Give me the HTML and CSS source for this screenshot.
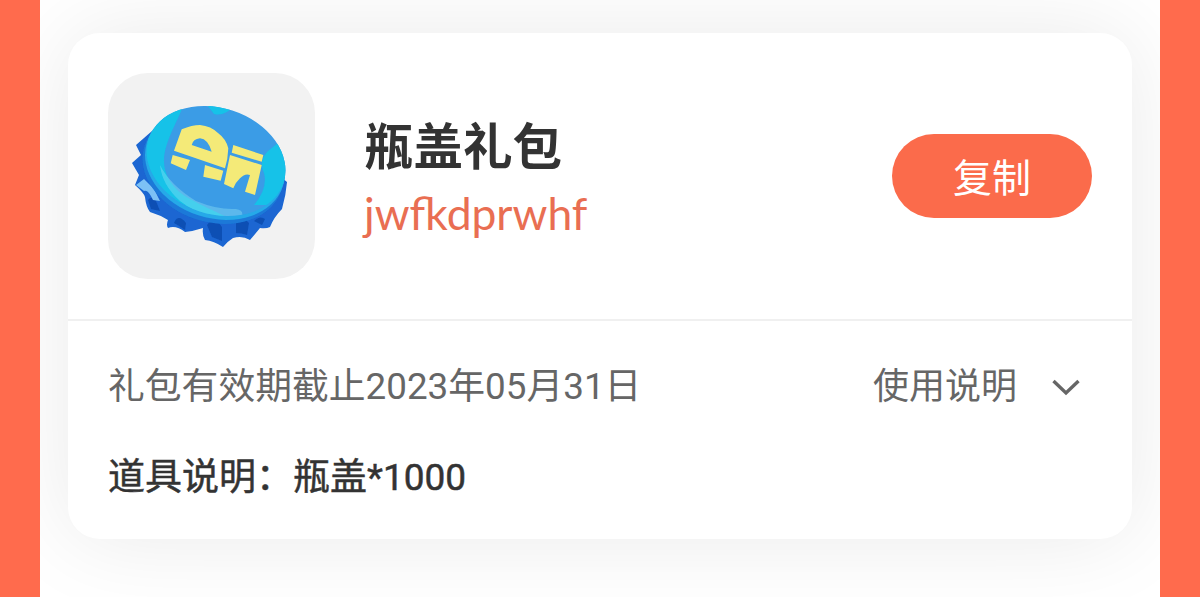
FILE: index.html
```html
<!DOCTYPE html>
<html lang="zh">
<head>
<meta charset="utf-8">
<title>瓶盖礼包</title>
<link rel="stylesheet" href="styles.css">
</head>
<body>
<main class="panel">
  <section class="card">
    <div class="head">
      <div class="tile">
        <svg class="cap" viewBox="0 0 207 207" width="207" height="207">
          <defs>
            <clipPath id="face"><ellipse cx="108" cy="88" rx="71" ry="53" transform="rotate(18 108 88)"/></clipPath>
            <filter id="soft" x="-5%" y="-5%" width="110%" height="110%"><feGaussianBlur stdDeviation=".7"/></filter>
          </defs>
          <g filter="url(#soft)">
            <path fill="#1a66d2" d="M44 58L28 72L33 82L24 90L31 102L27 112Q36 120 37 124Q38 134 42 139Q52 142 60 147Q58 152 60 155Q68 152 77 159Q86 158 95 155Q94 162 97 167Q106 168 115 174Q120 168 125 165Q134 162 142 167Q148 160 152 155Q158 156 162 154Q166 144 174 136Q178 122 179 109L120 60Z"/>
            <path fill="#0f4fb4" d="M66 150Q70 140 78 150L77 157Q70 152 66 150ZM99 152Q106 142 114 154L114 168L104 164ZM128 150Q134 142 141 150L139 162Q134 160 128 160ZM146 148Q152 142 157 146L154 152ZM40 127Q44 122 48 128L52 138L43 136Z"/>
            <path fill="#7cc1f5" d="M28 112L36 106L46 116L52 128L45 127Q40 116 36 118Q32 115 28 112Z"/>
            <ellipse cx="105" cy="95" rx="72" ry="54" transform="rotate(18 105 95)" fill="#1b79d8"/>
            <ellipse cx="107" cy="91" rx="71.5" ry="54" transform="rotate(18 107 91)" fill="#25a9e8"/>
            <ellipse cx="108" cy="88" rx="71" ry="53" transform="rotate(18 108 88)" fill="#3a9ce6"/>
            <g clip-path="url(#face)">
              <path fill="#14c2e8" d="M25 30L76 30C72 44 62 58 57 78C53 96 60 114 82 126C100 136 112 140 130 150L25 150Z"/>
              <path fill="#14c2e8" d="M96 28L106 41Q118 44 128 30ZM175 66L160 78Q150 88 156 100Q160 116 146 132L195 132Z"/>
              <path fill="#8fe3f5" opacity=".4" d="M52 92Q62 112 88 128Q110 137 128 136Q136 137 134 144Q100 150 72 128Q54 112 52 92Z"/>
            </g>
            <path fill="#f4ea78" fill-rule="evenodd" d="M73.7 56.3Q84 52 92 52Q103 53 110.3 60.3Q118 66 120.3 75.3Q120 86 117 95.3L66 77.7ZM83.7 72L103.7 78.7Q100 66 92 65.3Q85 66 83.7 72Z"/>
            <path fill="#f4ea78" d="M64.7 82L82 87L78 97L62.7 90.3ZM97 92L115.3 97.7L112.7 107.7L95.3 103.7Z"/>
            <path fill="#f4ea78" d="M125.3 72L155.3 82L153.7 88.7L123.7 79.7ZM122 82L153.7 92L147 122L137 118.7L142 102Q137 100 132 105.3Q127 110 125.3 115.3L116 111Z"/>
          </g>
        </svg>
      </div>
      <div class="info">
        <h1 class="name">瓶盖礼包</h1>
        <p class="code">jwfkdprwhf</p>
      </div>
      <button class="copy" type="button">复制</button>
    </div>
    <div class="foot">
      <div class="meta">
        <span class="expiry">礼包有效期截止2023年05月31日</span>
        <span class="usage">使用说明
          <svg class="chev" viewBox="0 0 30 18" width="30" height="18"><path d="M2.5 3L15 15L27.5 3" fill="none" stroke="#666" stroke-width="3.4"/></svg>
        </span>
      </div>
      <p class="desc">道具说明：瓶盖*1000</p>
    </div>
  </section>
</main>
</body>
</html>
```
FILE: styles.css
```css
* { box-sizing: border-box; }
html, body { margin: 0; height: 597px; overflow: hidden; }
body {
  background: #ff6b4d;
  padding: 0 40px;
  font-family: "Roboto", "Noto Sans CJK SC", sans-serif;
}
.panel {
  height: 597px;
  padding: 33px 28px 0;
  background: #fff;
  overflow: hidden;
}
.card {
  height: 506px;
  background: #fff;
  border-radius: 32px;
  box-shadow: 0 0 90px rgba(0, 0, 0, .085);
}
.head {
  height: 288px;
  padding: 40px 40px 0;
  display: flex;
  align-items: flex-start;
  border-bottom: 2px solid #f0f0f0;
}
.tile {
  width: 207px;
  height: 206px;
  border-radius: 40px;
  background: #f2f2f2;
  flex: none;
}
.cap { display: block; }
.info { margin-left: 49px; flex: 1; padding-top: 41px; }
.name {
  margin: 0;
  font-size: 49.5px;
  line-height: 68px;
  font-weight: 700;
  color: #333;
}
.code {
  margin: -1px 0 0;
  font-family: "Lato", sans-serif;
  font-size: 44.4px;
  line-height: 64px;
  color: #e96e52;
}
.copy {
  margin-top: 61px;
  width: 200px;
  height: 84px;
  padding: 0 0 3px;
  border: 0;
  border-radius: 42px;
  background: #fb6b4b;
  color: #fff;
  font: 400 39px "Noto Sans CJK SC", sans-serif;
}
.foot { padding: 41px 40px 0; }
.meta {
  display: flex;
  justify-content: space-between;
  align-items: center;
  font-size: 36.8px;
  line-height: 50px;
  color: #666;
}
.usage { display: flex; align-items: center; gap: 34px; font-size: 36px; }
.chev { margin-right: 11px; }
.desc {
  margin: 43px 0 0;
  font-size: 37px;
  line-height: 46px;
  font-weight: 400;
  -webkit-text-stroke: .5px #333;
  color: #333;
}
```
